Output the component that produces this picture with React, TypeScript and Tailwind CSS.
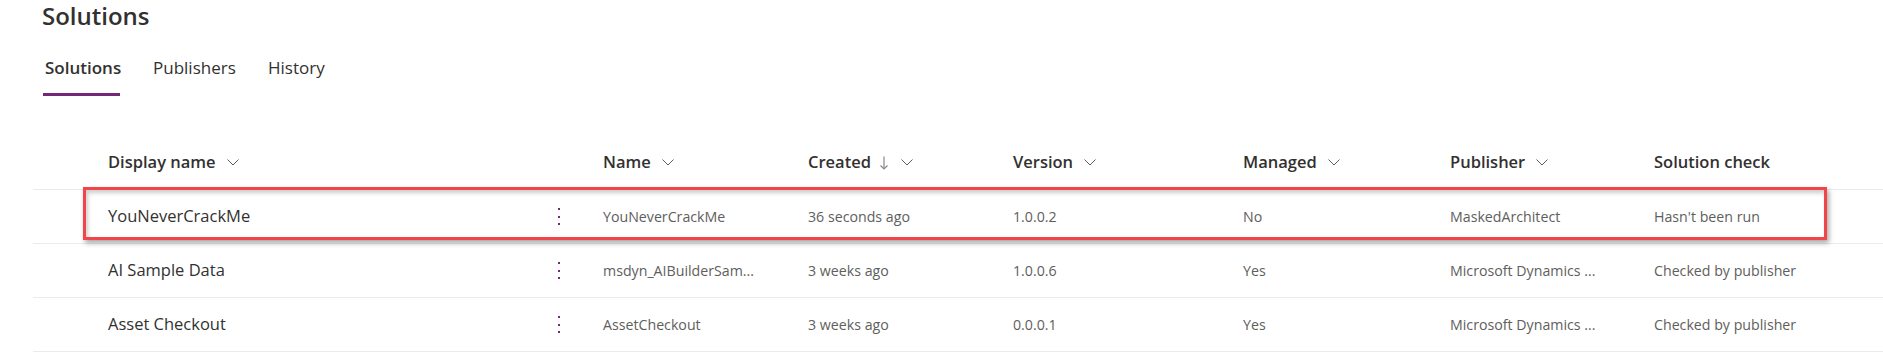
import React from 'react';

const cols = 'grid grid-cols-[75px_448px_47px_205px_205px_230px_207px_204px_1fr] items-center';

function Chevron() {
  return (
    <svg width="12" height="7" viewBox="0 0 12 7" className="shrink-0">
      <polyline points="0.5,0.5 6,6 11.5,0.5" fill="none" stroke="#605e5c" strokeWidth="1" />
    </svg>
  );
}

function DownArrow() {
  return (
    <svg width="8" height="14" viewBox="0 0 8 14" className="shrink-0">
      <line x1="4" y1="0.5" x2="4" y2="13" stroke="#8a8886" strokeWidth="1.2" />
      <polyline points="0.5,9.5 4,13 7.5,9.5" fill="none" stroke="#8a8886" strokeWidth="1.2" />
    </svg>
  );
}

function MoreDots() {
  return (
    <div className="flex flex-col gap-[5.5px] pl-[2px]">
      <span className="block w-[2px] h-[2px] bg-[#742774]" />
      <span className="block w-[2px] h-[2px] bg-[#742774]" />
      <span className="block w-[2px] h-[2px] bg-[#742774]" />
    </div>
  );
}

function HeaderCell({ label, sortable = true, sorted = false }: { label: string; sortable?: boolean; sorted?: boolean }) {
  return (
    <div className="flex items-center">
      <span>{label}</span>
      {sorted && (
        <span className="ml-[9px] flex items-center">
          <DownArrow />
        </span>
      )}
      {sortable && (
        <span className={sorted ? 'ml-[13px] flex items-center' : 'ml-[11px] flex items-center'}>
          <Chevron />
        </span>
      )}
    </div>
  );
}

const rows = [
  {
    display: 'YouNeverCrackMe',
    name: 'YouNeverCrackMe',
    created: '36 seconds ago',
    version: '1.0.0.2',
    managed: 'No',
    publisher: 'MaskedArchitect',
    check: "Hasn't been run",
    highlight: true,
  },
  {
    display: 'AI Sample Data',
    name: 'msdyn_AIBuilderSam...',
    created: '3 weeks ago',
    version: '1.0.0.6',
    managed: 'Yes',
    publisher: 'Microsoft Dynamics ...',
    check: 'Checked by publisher',
    highlight: false,
  },
  {
    display: 'Asset Checkout',
    name: 'AssetCheckout',
    created: '3 weeks ago',
    version: '0.0.0.1',
    managed: 'Yes',
    publisher: 'Microsoft Dynamics ...',
    check: 'Checked by publisher',
    highlight: false,
  },
];

export default function App() {
  return (
    <div className="w-[1883px] h-[355px] overflow-hidden bg-white font-['Open_Sans',sans-serif] text-[#323130]">
      {/* Page title */}
      <div className="pl-[42px] h-[32px] text-[24px] leading-[32px] font-semibold">Solutions</div>

      {/* Tabs */}
      <div className="mt-[24px] flex pl-[43px] text-[17px] leading-[24px]">
        <div className="w-[110px] flex flex-col">
          <span className="pl-[2px] font-semibold">Solutions</span>
          <span className="mt-[13px] block w-[77px] h-[3px] bg-[#742774]" />
        </div>
        <div className="w-[115px]">Publishers</div>
        <div>History</div>
      </div>

      {/* Table */}
      <div className="ml-[33px] mt-[40px]">
        <div className={`${cols} h-[54px] border-b border-[#edebe9] text-[16.5px] font-semibold`}>
          <div />
          <HeaderCell label="Display name" />
          <div />
          <HeaderCell label="Name" />
          <HeaderCell label="Created" sorted />
          <HeaderCell label="Version" />
          <HeaderCell label="Managed" />
          <HeaderCell label="Publisher" />
          <HeaderCell label="Solution check" sortable={false} />
        </div>

        {rows.map((r) => (
          <div key={r.display} className={`${cols} relative h-[54px] border-b border-[#edebe9] text-[14.2px] text-[#605e5c]`}>
            <div />
            <div className="text-[16.5px] text-[#323130]">{r.display}</div>
            <MoreDots />
            <div className="whitespace-nowrap">{r.name}</div>
            <div>{r.created}</div>
            <div>{r.version}</div>
            <div>{r.managed}</div>
            <div className="whitespace-nowrap">{r.publisher}</div>
            <div>{r.check}</div>
            {r.highlight && (
              <div className="absolute top-[-3px] left-[50px] w-[1744px] h-[53px] border-[3px] border-[#f2454b] shadow-[2px_3px_5px_rgba(0,0,0,0.35),inset_2px_3px_4px_rgba(0,0,0,0.2)] pointer-events-none" />
            )}
          </div>
        ))}
      </div>
    </div>
  );
}
